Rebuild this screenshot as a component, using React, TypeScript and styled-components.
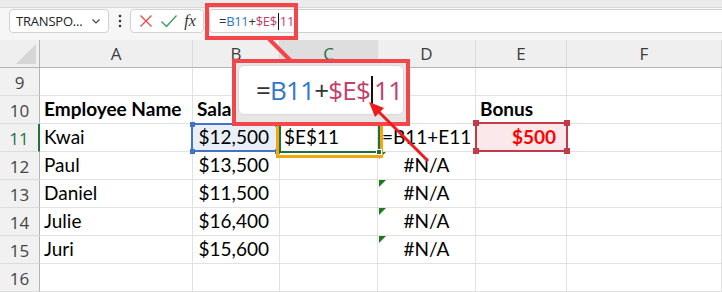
import React from 'react';
import styled, { createGlobalStyle } from 'styled-components';

const Global = createGlobalStyle`
  html, body { margin: 0; padding: 0; background: #ffffff; }
  body { width: 722px; height: 292px; overflow: hidden; font-family: "Open Sans", "Noto Sans", sans-serif; }
  * { box-sizing: border-box; }
`;

const Page = styled.div`
  position: relative;
  width: 722px;
  height: 292px;
  overflow: hidden;
  background: #ffffff;
`;

const TopStrip = styled.div`
  height: 8px;
  background: #ebebeb;
  border-bottom: 1px solid #d6d6d6;
`;

const FormulaArea = styled.div`
  display: flex;
  align-items: flex-start;
  height: 32px;
  padding: 1px 0 0 9px;
  background: #f6f6f6;
`;

const NameBox = styled.div`
  display: flex;
  align-items: center;
  justify-content: space-between;
  width: 100px;
  height: 24px;
  padding: 0 6px 0 6px;
  background: #ffffff;
  border: 1px solid #d2d2d2;
  border-radius: 4px;
  font-size: 13px;
  color: #222;
  letter-spacing: -0.2px;
`;

const Dots = styled.div`
  display: flex;
  align-items: center;
  justify-content: center;
  width: 21px;
  height: 24px;
`;

const ButtonGroup = styled.div`
  display: flex;
  align-items: center;
  justify-content: space-around;
  width: 74px;
  height: 24px;
  padding: 0 4px;
  background: #ffffff;
  border: 1px solid #d2d2d2;
  border-radius: 4px;
`;

const Fx = styled.span`
  font-family: "Liberation Serif", "DejaVu Serif", serif;
  font-style: italic;
  font-size: 16px;
  color: #333;
  line-height: 1;
`;

const FormulaInput = styled.div`
  display: flex;
  align-items: center;
  flex: 1;
  height: 24px;
  margin-left: 5px;
  padding-left: 9px;
  background: #ffffff;
  border: 1px solid #cfcfcf;
  border-right: none;
  border-radius: 4px 0 0 4px;
  font-size: 13px;
  letter-spacing: -0.3px;
`;

const Tok = styled.span<{ $c: string }>`
  color: ${(p) => p.$c};
`;

const Caret = styled.span<{ $h: number; $w: number }>`
  display: inline-block;
  width: ${(p) => p.$w}px;
  height: ${(p) => p.$h}px;
  background: #111;
  margin: 0 1px;
  vertical-align: middle;
`;

const Grid = styled.div`
  display: grid;
  grid-template-columns: 40px 153px 87px 98px 98px 91px 155px;
  grid-auto-rows: 28px;
`;

const ColHead = styled.div<{ $active?: boolean }>`
  position: relative;
  display: flex;
  align-items: center;
  justify-content: center;
  background: ${(p) => (p.$active ? '#dedede' : '#efefef')};
  border-right: 1px solid #dadada;
  border-bottom: ${(p) => (p.$active ? '2px solid #1e7145' : '1px solid #b4b4b4')};
  color: ${(p) => (p.$active ? '#1e7145' : '#3c3c3c')};
  font-size: 17px;
`;

const Corner = styled.div`
  position: relative;
  background: #efefef;
  border-right: 1px solid #b4b4b4;
  border-bottom: 1px solid #b4b4b4;
`;

const RowHead = styled.div<{ $active?: boolean }>`
  display: flex;
  align-items: center;
  justify-content: center;
  background: #f1f1f1;
  border-bottom: 1px solid #dcdcdc;
  border-right: ${(p) => (p.$active ? '2px solid #1e7145' : '1px solid #b4b4b4')};
  color: ${(p) => (p.$active ? '#1e7145' : '#444')};
  font-size: 17px;
  padding-top: 1px;
`;

const Cell = styled.div<{ $align?: string; $bold?: boolean; $color?: string }>`
  position: relative;
  display: flex;
  align-items: flex-end;
  justify-content: ${(p) => p.$align || 'flex-start'};
  padding: 0 ${(p) => (p.$align === 'flex-end' ? '10px' : '4px')} 3px 4px;
  border-right: 1px solid #e1e1e1;
  border-bottom: 1px solid #e1e1e1;
  font-family: Lato, "Open Sans", sans-serif;
  font-size: 19px;
  font-weight: ${(p) => (p.$bold ? 700 : 400)};
  color: ${(p) => p.$color || '#000'};
  white-space: nowrap;
  line-height: 22px;
`;

const CellText = styled.span`
  position: relative;
  z-index: 2;
`;

const ErrorMark = styled.span`
  position: absolute;
  left: 1px;
  top: 0px;
  width: 0;
  height: 0;
  border-top: 7px solid #1f7a1f;
  border-right: 7px solid transparent;
`;

const SelBox = styled.div<{ $c: string; $fill?: string; $l: number; $t: number; $r: number; $b: number; $w?: number }>`
  position: absolute;
  left: ${(p) => p.$l}px;
  top: ${(p) => p.$t}px;
  right: ${(p) => p.$r}px;
  bottom: ${(p) => p.$b}px;
  border: ${(p) => p.$w || 2}px solid ${(p) => p.$c};
  background: ${(p) => p.$fill || 'transparent'};
  z-index: 1;
`;

const Handle = styled.span<{ $c: string; $x: 'l' | 'r'; $y: 't' | 'b'; $s?: number }>`
  position: absolute;
  width: ${(p) => p.$s || 6}px;
  height: ${(p) => p.$s || 6}px;
  background: ${(p) => p.$c};
  ${(p) => (p.$x === 'l' ? 'left' : 'right')}: -${(p) => ((p.$s || 6) + 2) / 2}px;
  ${(p) => (p.$y === 't' ? 'top' : 'bottom')}: -${(p) => ((p.$s || 6) + 2) / 2}px;
`;

const FillHandle = styled.span`
  position: absolute;
  right: -4px;
  bottom: -4px;
  width: 6px;
  height: 6px;
  background: #1e7145;
  border: 1px solid #fff;
`;

const RedFrame = styled.div<{ $l: number; $t: number; $w: number; $h: number }>`
  position: absolute;
  left: ${(p) => p.$l}px;
  top: ${(p) => p.$t}px;
  width: ${(p) => p.$w}px;
  height: ${(p) => p.$h}px;
  border: 4px solid #f2464a;
  z-index: 5;
`;

const Callout = styled(RedFrame)`
  background: #e6e6e6;
  padding: 2px 2px 7px 2px;
  display: flex;
`;

const CalloutInner = styled.div`
  flex: 1;
  display: flex;
  align-items: center;
  padding: 0 0 0 17px;
  background: #ffffff;
  border: 1px solid #d8d8d8;
  border-radius: 6px;
  font-size: 26px;
  letter-spacing: -0.8px;
  line-height: 1;
`;

const Overlay = styled.svg`
  position: absolute;
  left: 0;
  top: 0;
  z-index: 6;
  pointer-events: none;
`;

const CornerTri = styled.svg`
  position: absolute;
  right: 3px;
  bottom: 3px;
`;

type CellSpec = { t?: string; align?: string; bold?: boolean; color?: string; err?: boolean };

const names = ['Paul', 'Daniel', 'Julie', 'Juri'];
const sal = ['$13,500', '$11,500', '$16,400', '$15,600'];

const cols = ['A', 'B', 'C', 'D', 'E', 'F'];

function Formula({ big }: { big?: boolean }) {
  return (
    <>
      <Tok $c="#333">=</Tok>
      <Tok $c="#2f78cc">B11</Tok>
      <Tok $c="#333">+</Tok>
      <Tok $c="#c2406a">$E$</Tok>
      <Caret $h={big ? 28 : 17} $w={big ? 2 : 1} />
      <Tok $c="#c2406a">11</Tok>
    </>
  );
}

export default function App() {
  const rows: { n: number; cells: CellSpec[] }[] = [
    { n: 9, cells: [{}, {}, {}, {}, {}, {}] },
    {
      n: 10,
      cells: [{ t: 'Employee Name', bold: true }, { t: 'Salary', bold: true }, {}, {}, { t: 'Bonus', bold: true }, {}],
    },
    { n: 11, cells: [{ t: 'Kwai' }, {}, {}, {}, {}, {}] },
    ...names.map((nm, i) => ({
      n: 12 + i,
      cells: [{ t: nm }, { t: sal[i], align: 'flex-end' }, {}, { t: '#N/A', align: 'center', err: true }, {}, {}],
    })),
    { n: 16, cells: [{}, {}, {}, {}, {}, {}] },
  ];

  return (
    <Page>
      <Global />
      <TopStrip />
      <FormulaArea>
        <NameBox>
          <span>TRANSPO...</span>
          <svg width="12" height="12" viewBox="0 0 12 12">
            <path d="M2.5 4.5 L6 8 L9.5 4.5" fill="none" stroke="#444" strokeWidth="1.2" />
          </svg>
        </NameBox>
        <Dots>
          <svg width="4" height="14" viewBox="0 0 4 14">
            <circle cx="2" cy="2" r="1.3" fill="#333" />
            <circle cx="2" cy="7" r="1.3" fill="#333" />
            <circle cx="2" cy="12" r="1.3" fill="#333" />
          </svg>
        </Dots>
        <ButtonGroup>
          <svg width="16" height="16" viewBox="0 0 16 16">
            <path d="M2.5 2.5 L13.5 13.5 M13.5 2.5 L2.5 13.5" stroke="#e14b4b" strokeWidth="1.3" fill="none" />
          </svg>
          <svg width="18" height="16" viewBox="0 0 18 16">
            <path d="M1.5 8.5 L6.5 13.5 L16.5 2.5" stroke="#3f9b57" strokeWidth="1.3" fill="none" />
          </svg>
          <Fx>fx</Fx>
        </ButtonGroup>
        <FormulaInput>
          <Formula />
        </FormulaInput>
      </FormulaArea>

      <Grid>
        <Corner>
          <CornerTri width="20" height="20" viewBox="0 0 20 20">
            <path d="M20 0 L20 20 L0 20 Z" fill="#d6d6d6" />
          </CornerTri>
        </Corner>
        {cols.map((c) => (
          <ColHead key={c} $active={c === 'C'}>
            {c}
          </ColHead>
        ))}
        {rows.map((r) => (
          <React.Fragment key={r.n}>
            <RowHead $active={r.n === 11}>{r.n}</RowHead>
            {r.n === 11 ? (
              <>
                <Cell>
                  <CellText>Kwai</CellText>
                </Cell>
                <Cell $align="flex-end">
                  <SelBox $c="#4472c4" $fill="#e9eff9" $l={-2} $t={-1} $r={1} $b={-1}>
                    <Handle $c="#4472c4" $x="l" $y="t" $s={5} />
                    <Handle $c="#4472c4" $x="r" $y="t" $s={5} />
                    <Handle $c="#4472c4" $x="l" $y="b" $s={5} />
                    <Handle $c="#4472c4" $x="r" $y="b" $s={5} />
                  </SelBox>
                  <CellText>$12,500</CellText>
                </Cell>
                <Cell>
                  <SelBox $c="#f2a60c" $w={3} $l={-4} $t={-2} $r={-6} $b={-7} />
                  <SelBox $c="#1e7145" $l={-1} $t={-1} $r={-3} $b={-2}>
                    <FillHandle />
                  </SelBox>
                  <CellText>$E$11</CellText>
                </Cell>
                <Cell>
                  <CellText>=B11+E11</CellText>
                </Cell>
                <Cell $align="flex-end" $bold $color="#ff0000">
                  <SelBox $c="#c23b4b" $fill="#fbe8ea" $l={-1} $t={-2} $r={-2} $b={-1}>
                    <Handle $c="#c23b4b" $x="l" $y="t" />
                    <Handle $c="#c23b4b" $x="r" $y="t" />
                    <Handle $c="#c23b4b" $x="l" $y="b" />
                    <Handle $c="#c23b4b" $x="r" $y="b" />
                  </SelBox>
                  <CellText>$500</CellText>
                </Cell>
                <Cell />
              </>
            ) : (
              r.cells.map((c, i) => (
                <Cell key={i} $align={c.align} $bold={c.bold} $color={c.color}>
                  {c.err && <ErrorMark />}
                  {c.t && <CellText>{c.t}</CellText>}
                </Cell>
              ))
            )}
          </React.Fragment>
        ))}
      </Grid>

      <RedFrame $l={205} $t={3} $w={93} $h={37} />
      <Callout $l={232} $t={59} $w={178} $h={67}>
        <CalloutInner>
          <Formula big />
        </CalloutInner>
      </Callout>

      <Overlay width="722" height="292" viewBox="0 0 722 292">
        <line x1="269" y1="39" x2="291" y2="61" stroke="#f2464a" strokeWidth="4" />
        <line x1="428" y1="161" x2="378" y2="111" stroke="#ee1c1c" strokeWidth="3" />
        <path d="M369 102 L384 108 L375 117 Z" fill="#ee1c1c" />
      </Overlay>
    </Page>
  );
}
